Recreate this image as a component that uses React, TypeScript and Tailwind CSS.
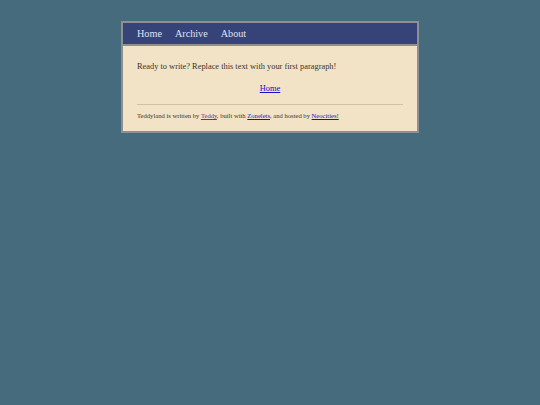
export default function App() {
  return (
    <div className="min-h-screen bg-[#466b7c] pt-[21px] font-['Liberation_Serif',serif]">
      <div className="mx-auto w-[298px] border-2 border-[#8d8f92] bg-[#f2e3c6]">
        <nav className="flex h-[23px] items-center gap-[13px] border-b-2 border-[#8d8f92] bg-[#364379] px-[14px] text-[10.2px] text-[#dfe4f4]">
          <a href="#">Home</a>
          <a href="#">Archive</a>
          <a href="#">About</a>
        </nav>
        <main className="px-[14px] pb-[10px] pt-[15px] text-[#38332d]">
          <p className="text-[8.4px] leading-[12px]">Ready to write? Replace this text with your first paragraph!</p>
          <p className="mt-[10px] text-center text-[8.4px] leading-[12px]">
            <a href="#" className="text-[#1a0dcc] underline">Home</a>
          </p>
          <hr className="mt-[9px] border-t border-[#cfc2a8]" />
          <p className="mt-[6px] text-[6.6px] leading-[10px]">
            Teddyland is written by <a href="#" className="text-[#6a2f8a] underline">Teddy</a>, built with{" "}
            <a href="#" className="text-[#1a0dcc] underline">Zonelets</a>, and hosted by{" "}
            <a href="#" className="text-[#1a0dcc] underline">Neocities!</a>
          </p>
        </main>
      </div>
    </div>
  );
}
